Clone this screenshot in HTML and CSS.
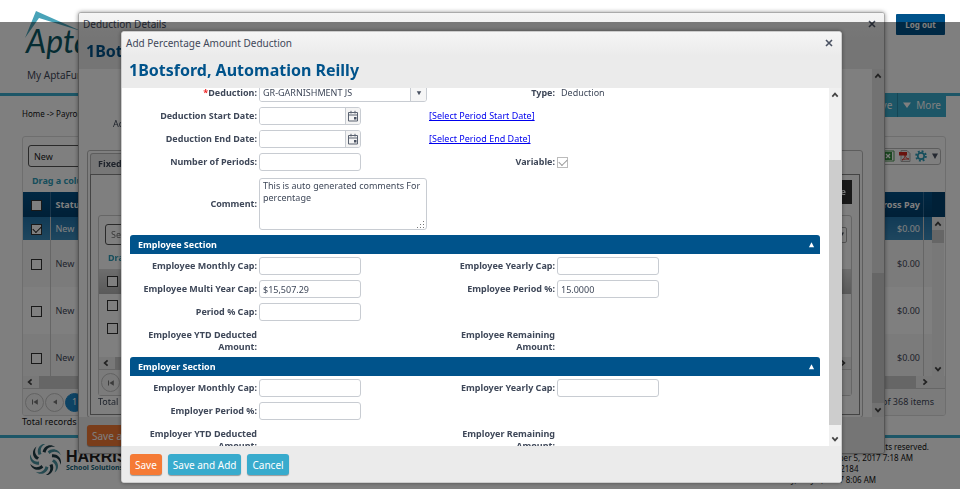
FILE: index.html
```html
<!DOCTYPE html>
<html lang="en">
<head>
<meta charset="utf-8">
<title>AptaFund - Add Percentage Amount Deduction</title>
<link rel="stylesheet" href="styles.css">
</head>
<body>
<svg class="defs" aria-hidden="true">
  <symbol id="up" viewBox="0 0 8 8"><path d="M1.300 5.600 4 2.600l2.700 3" fill="none" stroke="#444" stroke-width="1.700"/></symbol>
  <symbol id="down" viewBox="0 0 8 8"><path d="M1.300 2.400 4 5.400l2.700-3" fill="none" stroke="#444" stroke-width="1.700"/></symbol>
  <symbol id="left" viewBox="0 0 8 8"><path d="M5.600 1.300 2.600 4l3 2.700" fill="none" stroke="#444" stroke-width="1.700"/></symbol>
  <symbol id="right" viewBox="0 0 8 8"><path d="M2.400 1.300 5.400 4l-3 2.700" fill="none" stroke="#444" stroke-width="1.700"/></symbol>
  <symbol id="close" viewBox="0 0 8 8"><path d="M1 1l6 6M7 1 1 7" fill="none" stroke="#4a5262" stroke-width="1.600"/></symbol>
  <symbol id="first" viewBox="0 0 8 8"><path d="M1.500 1.500v5" stroke="#777" stroke-width="1"/><path d="M6.800 1.200v5.600L2.400 4z" fill="#777"/></symbol>
  <symbol id="prev" viewBox="0 0 8 8"><path d="M6 1.500v5L2 4z" fill="#777"/></symbol>
  <symbol id="caret" viewBox="0 0 8 8"><path d="M1 1.500h6L4 7z" fill="#4a5262"/></symbol>
  <symbol id="calendar" viewBox="0 0 12 12"><path d="M1.500 2.500h9v8.500h-9zM1.500 5h9M4 .8v2.700M8 .8v2.700" fill="none" stroke="#5a6270" stroke-width="1"/><path d="M7 7h2.500v2.500H7z" fill="#4a5262"/></symbol>
</svg>

<div class="page">
  <header class="top">
    <div class="brand">
      <svg class="roof" viewBox="0 0 56 28" aria-hidden="true"><path d="M11 0 0 27 14 7 56 20z" fill="#49a3b8"/></svg>
      <span class="brand-name">AptaFund</span>
    </div>
    <button class="logout" type="button">Log out</button>
    <div class="my">My AptaFund</div>
  </header>
  <nav class="menu">
    <a class="menu-item" href="#">Save</a>
    <a class="menu-item" href="#"><svg class="menu-caret" viewBox="0 0 8 8" aria-hidden="true"><path d="M0 1.500h8L4 7z" fill="#fff"/></svg>More</a>
  </nav>
  <div class="crumbs">Home -&gt; Payroll</div>

  <main class="card">
    <div class="card-bar">
      <input class="filter" type="text" value="New" aria-label="View">
      <div class="tools">
        <svg class="tool" viewBox="0 0 12 12" aria-label="Excel"><path d="M1 1h10v10H1z" fill="#fff" stroke="#4d9a52"/><path d="M1 2h8v8H1z" fill="#379040"/><path d="M3 4l4 4M7 4 3 8" stroke="#fff" stroke-width="1.300"/></svg>
        <svg class="tool" viewBox="0 0 12 12" aria-label="PDF"><path d="M2 .5h6l3 3v8H2z" fill="#eee" stroke="#aaa"/><path d="M0 2h8v3.500H0z" fill="#d3261c"/><path d="M3 10c2-1 3-3 3-5 0 2 2 4 4 4-3 0-5 0-7 1z" fill="none" stroke="#d3261c" stroke-width=".8"/></svg>
        <svg class="tool" viewBox="0 0 12 12" aria-label="Settings"><circle cx="6" cy="6" r="4.800" fill="none" stroke="#2e9cb8" stroke-width="2" stroke-dasharray="1.900 1.870"/><circle cx="6" cy="6" r="3.200" fill="none" stroke="#2e9cb8" stroke-width="1.700"/></svg>
        <svg class="mini" aria-hidden="true"><use href="#caret"/></svg>
      </div>
    </div>
    <div class="drag">Drag a column header here</div>
    <div class="grid-wrap">
      <table class="grid">
        <thead><tr><th class="c-check"><input type="checkbox" aria-label="Select all"></th><th>Status</th><th class="num">Gross Pay</th><th class="c-pad"></th></tr></thead>
        <tbody>
          <tr class="picked"><td class="c-check"><input type="checkbox" checked aria-label="Select row 1"></td><td>New</td><td class="num">$0.00</td><td></td></tr>
          <tr><td class="c-check"><input type="checkbox" aria-label="Select row 2"></td><td>New</td><td class="num">$0.00</td><td></td></tr>
          <tr><td class="c-check"><input type="checkbox" aria-label="Select row 3"></td><td>New</td><td class="num">$0.00</td><td></td></tr>
          <tr><td class="c-check"><input type="checkbox" aria-label="Select row 4"></td><td>New</td><td class="num">$0.00</td><td></td></tr>
        </tbody>
      </table>
      <div class="grid-side">
        <div class="grid-corner"></div>
        <div class="vbar"><svg class="mini"><use href="#up"/></svg><div class="thumb short"></div><svg class="mini end"><use href="#down"/></svg></div>
      </div>
    </div>
    <div class="hbar"><svg class="mini"><use href="#left"/></svg><div class="hthumb"></div><svg class="mini"><use href="#right"/></svg></div>
    <div class="pager">
      <button class="round" type="button" aria-label="First"><svg class="mini"><use href="#first"/></svg></button>
      <button class="round" type="button" aria-label="Previous"><svg class="mini"><use href="#prev"/></svg></button>
      <button class="round current" type="button">1</button>
      <span class="count">of 368 items</span>
    </div>
  </main>
  <div class="records">Total records</div>
  <footer class="foot">
    <div class="harris">
      <svg class="swirl" viewBox="-16 -16 32 32" aria-hidden="true">
        <g fill="#1e3c46">
          <path d="M-3-8C-2-14 5-17 10-13 5-14 1-12 0-7z"/>
          <path d="M-3-8C-2-14 5-17 10-13 5-14 1-12 0-7z" transform="rotate(72)"/>
          <path d="M-3-8C-2-14 5-17 10-13 5-14 1-12 0-7z" transform="rotate(144)"/>
          <path d="M-3-8C-2-14 5-17 10-13 5-14 1-12 0-7z" transform="rotate(216)"/>
          <path d="M-3-8C-2-14 5-17 10-13 5-14 1-12 0-7z" transform="rotate(288)"/>
        </g>
        <g fill="#4a93a0">
          <path d="M-3-8C-2-14 5-17 10-13 5-14 1-12 0-7z" transform="rotate(36)"/>
          <path d="M-3-8C-2-14 5-17 10-13 5-14 1-12 0-7z" transform="rotate(108)"/>
          <path d="M-3-8C-2-14 5-17 10-13 5-14 1-12 0-7z" transform="rotate(180)"/>
          <path d="M-3-8C-2-14 5-17 10-13 5-14 1-12 0-7z" transform="rotate(252)"/>
          <path d="M-3-8C-2-14 5-17 10-13 5-14 1-12 0-7z" transform="rotate(324)"/>
        </g>
      </svg>
      <div><div class="harris-name">HARRIS</div><div class="harris-sub">School Solutions</div></div>
    </div>
    <div class="legal">© 2017 Harris School Solutions. All rights reserved.<br>Updated: Tuesday, September 5, 2017 7:18 AM<br>Software Version: 2017.3.0.2184<br>Built on: Friday, May 5, 2017 8:06 AM</div>
  </footer>
</div>

<section class="dialog details" aria-label="Deduction Details">
  <div class="dialog-head">
    <div class="dialog-title">Deduction Details<button class="x" type="button" aria-label="Close"><svg class="mini"><use href="#close"/></svg></button></div>
    <h2 class="person">1Botsford, Automation Reilly</h2>
  </div>
  <div class="dialog-body">
    <div class="details-main">
      <div class="active-line">Active Deductions</div>
      <div class="tabs">
        <button class="tab" type="button">Fixed</button>
        <div class="tab-panel">
          <button class="dark" type="button">Create</button>
          <div class="sub-grid">
            <div class="sub-bar"><input class="filter sub-filter" type="text" placeholder="Search" aria-label="Search"><span class="sub-drop"><svg class="mini"><use href="#caret"/></svg></span></div>
            <div class="drag sub-drag">Drag a column header here</div>
            <div class="sub-row head"><input type="checkbox" aria-label="Select all deductions"></div>
            <div class="sub-row"><input type="checkbox" aria-label="Select deduction 1"></div>
            <div class="sub-row"><input type="checkbox" aria-label="Select deduction 2"></div>
            <div class="hbar"><svg class="mini"><use href="#left"/></svg><div class="hthumb"></div><svg class="mini"><use href="#right"/></svg></div>
            <div class="pager"><button class="round" type="button" aria-label="First deduction page"><svg class="mini"><use href="#first"/></svg></button></div>
          </div>
          <div class="sub-total">Total records</div>
        </div>
      </div>
    </div>
    <div class="vbar dim"><svg class="mini"><use href="#up"/></svg><div class="thumb low"></div><svg class="mini"><use href="#down"/></svg></div>
  </div>
  <div class="dialog-foot"><button class="btn primary" type="button">Save and Close</button></div>
</section>

<div class="shade"></div>

<section class="dialog add" role="dialog" aria-label="Add Percentage Amount Deduction">
  <div class="dialog-head">
    <div class="dialog-title">Add Percentage Amount Deduction<button class="x" type="button" aria-label="Close"><svg class="mini"><use href="#close"/></svg></button></div>
    <h2 class="person">1Botsford, Automation Reilly</h2>
  </div>
  <div class="dialog-body">
    <form class="form">
      <div class="fields">
        <label for="ded"><span class="req">*</span>Deduction:</label>
        <div class="combo"><select id="ded"><option>GR-GARNISHMENT JS</option></select><span class="combo-btn"><svg class="mini"><use href="#caret"/></svg></span></div>
        <span class="lab">Type:</span><span class="value">Deduction</span>

        <label for="start">Deduction Start Date:</label>
        <div class="date"><input id="start" type="text"><button type="button" aria-label="Pick start date"><svg class="cal"><use href="#calendar"/></svg></button></div>
        <a class="pick" href="#">[Select Period Start Date]</a>

        <label for="end">Deduction End Date:</label>
        <div class="date"><input id="end" type="text"><button type="button" aria-label="Pick end date"><svg class="cal"><use href="#calendar"/></svg></button></div>
        <a class="pick" href="#">[Select Period End Date]</a>

        <label for="num">Number of Periods:</label><input class="box" id="num" type="text">
        <label for="var">Variable:</label><input class="light" id="var" type="checkbox" checked>

        <label for="com">Comment:</label><div class="comment"><textarea id="com">This is auto generated comments For percentage</textarea><svg class="grip" viewBox="0 0 8 8" aria-hidden="true"><path d="M6 0h1v1H6zM3 3h1v1H3zM6 3h1v1H6zM0 6h1v1H0zM3 6h1v1H3zM6 6h1v1H6z" fill="#777"/></svg></div>
      </div>

      <h3 class="section">Employee Section<svg class="fold" viewBox="0 0 8 8" aria-hidden="true"><path d="M4 1.500 7 7H1z" fill="#fff"/></svg></h3>
      <div class="fields tight">
        <label for="emc">Employee Monthly Cap:</label><input class="box" id="emc" type="text">
        <label for="eyc">Employee Yearly Cap:</label><input class="box" id="eyc" type="text">
        <label for="emy">Employee Multi Year Cap:</label><input class="box" id="emy" type="text" value="$15,507.29">
        <label for="epp">Employee Period %:</label><input class="box" id="epp" type="text" value="15.0000">
        <label for="pct">Period % Cap:</label><input class="box wide" id="pct" type="text">
        <span class="lab">Employee YTD Deducted Amount:</span><span></span>
        <span class="lab">Employee Remaining Amount:</span><span></span>
      </div>

      <h3 class="section">Employer Section<svg class="fold" viewBox="0 0 8 8" aria-hidden="true"><path d="M4 1.500 7 7H1z" fill="#fff"/></svg></h3>
      <div class="fields tight">
        <label for="rmc">Employer Monthly Cap:</label><input class="box" id="rmc" type="text">
        <label for="ryc">Employer Yearly Cap:</label><input class="box" id="ryc" type="text">
        <label for="rpp">Employer Period %:</label><input class="box wide" id="rpp" type="text">
        <span class="lab">Employer YTD Deducted Amount:</span><span></span>
        <span class="lab">Employer Remaining Amount:</span><span></span>
      </div>
    </form>
    <div class="vbar"><svg class="mini"><use href="#up"/></svg><div class="thumb main"></div><svg class="mini"><use href="#down"/></svg></div>
  </div>
  <div class="dialog-foot">
    <button class="btn primary" type="button">Save</button>
    <button class="btn" type="button">Save and Add</button>
    <button class="btn" type="button">Cancel</button>
  </div>
</section>
</body>
</html>
```
FILE: styles.css
```css
* { box-sizing: border-box; }
html, body { height: 100%; }
body {
  margin: 0;
  overflow: hidden;
  background: #fff;
  color: #3f4859;
  font: 9px/12px "Noto Sans", "Open Sans", sans-serif;
}
button, input, select, textarea { font: inherit; color: inherit; margin: 0; }
button { cursor: pointer; }
.defs { position: absolute; width: 0; height: 0; }
.mini { display: block; width: 8px; height: 8px; flex: none; }

/* Page behind the dialogs */
.page { height: 100%; overflow: hidden; }
.top {
  display: grid;
  grid-template-columns: 1fr auto;
  grid-template-rows: 56px 1fr;
  height: 96px;
  padding: 11px 15px 0 25px;
  border-bottom: 3px solid #3aadce;
}
.brand { position: relative; }
.roof { position: absolute; left: 0; top: 0; width: 56px; height: 28px; }
.brand-name { display: block; padding: 12px 0 0 1px; font: italic 32px/36px Lato, sans-serif; color: #0b5864; }
.logout {
  align-self: start;
  width: 49px;
  height: 21px;
  margin-top: 3px;
  padding: 0;
  border: 0;
  border-radius: 1px;
  background: #00538b;
  color: #fff;
  font-weight: bold;
  font-size: 8px;
}
.my { padding-left: 2px; font-size: 10px; line-height: 16px; }
.menu { display: flex; width: max-content; margin: -3px 14px 0 auto; background: #3aadce; }
.menu-item {
  display: flex;
  align-items: center;
  gap: 5px;
  height: 24px;
  padding: 0 5px;
  color: #fff;
  font-size: 10px;
  text-decoration: none;
}
.menu-item + .menu-item { border-left: 1px solid #2b8dab; }
.menu-caret { width: 8px; height: 8px; }
.crumbs { margin: -9px 22px 0; color: #111; font-size: 8px; }

.card {
  margin: 16px 14px 0 22px;
  border: 1px solid #ddd;
  border-radius: 3px;
  overflow: hidden;
}
.card-bar { display: flex; justify-content: space-between; align-items: center; padding: 8px 4px 0 5px; }
.filter {
  width: 150px;
  height: 22px;
  padding: 0 5px;
  border: 1px solid #555;
  border-radius: 3px;
  background: #fff;
  color: #222;
}
.tools {
  display: flex;
  align-items: center;
  gap: 4px;
  height: 17px;
  padding: 0 1px 0 6px;
  border: 1px solid #bbb;
  border-radius: 3px;
}
.tool { width: 12px; height: 12px; }
.drag { padding: 8px 9px 5px; color: #2e9cb8; font-weight: bold; }
.grid-wrap { display: flex; height: 184px; overflow: hidden; }
.grid { flex: 1; align-self: flex-start; border-collapse: collapse; }
.grid th, .grid td { padding: 0 3px 0 5px; text-align: left; border-left: 1px solid #ccc; }
.grid th { height: 25px; background: linear-gradient(#004f86, #00406e); color: #fff; border-color: #356f9a; }
.grid td { height: 47px; }
.grid .picked td { height: 23px; background: linear-gradient(#2275ac, #3d8dbd); color: #fff; }
.grid .num { text-align: right; }
.grid .c-check { width: 27px; padding: 0; border-left: 0; text-align: center; }
.grid .c-pad { width: 8px; padding: 0; }
.grid tbody tr:nth-child(even) { background: #f7f7f7; }
input[type="checkbox"] {
  position: relative;
  appearance: none;
  width: 11px;
  height: 11px;
  border: 1px solid #333;
  background: #fff;
  vertical-align: middle;
}
input[type="checkbox"]:checked::after {
  content: "";
  position: absolute;
  left: 1px;
  top: 1px;
  width: 7px;
  height: 4px;
  border: solid #222;
  border-width: 0 0 1px 1px;
  transform: rotate(-45deg);
}
.grid-side { display: flex; flex-direction: column; width: 13px; }
.grid-corner { flex: none; height: 25px; background: #00406e; }
.vbar {
  display: flex;
  flex-direction: column;
  align-items: center;
  flex: none;
  width: 12px;
  padding: 3px 0;
  background: #f0f0f0;
}
.thumb { width: 12px; background: #cdcdcd; }
.short { height: 13px; margin-top: 2px; }
.grid-side .vbar { flex: 1; }
.end { margin-top: auto; }
.hbar { display: flex; align-items: center; gap: 5px; height: 12px; padding: 0 16px 0 3px; background: #f0f0f0; }
.hthumb { flex: 1; height: 12px; background: #cdcdcd; }
.pager { display: flex; align-items: center; gap: 1px; height: 27px; padding: 0 11px 0 2px; border-top: 1px solid #ccc; background: #f7f7f7; }
.round {
  display: grid;
  place-items: center;
  width: 19px;
  height: 19px;
  padding: 0;
  border: 1px solid #c4c4c4;
  border-radius: 50%;
  background: #f4f4f4;
}
.current { border-color: #1a86c8; background: #1a86c8; color: #fff; }
.count { margin-left: auto; }
.records { padding: 0 22px; color: #111; }
.foot {
  display: flex;
  justify-content: space-between;
  margin-top: 7px;
  padding: 3px 31px 0 30px;
  border-top: 3px solid #3aadce;
}
.harris { display: flex; gap: 5px; padding-top: 3px; }
.swirl { width: 31px; height: 31px; }
.harris-name { padding-top: 6px; font: bold 16px/13px "Liberation Sans", sans-serif; color: #222; }
.harris-sub { color: #12657a; font-weight: bold; font-size: 7px; line-height: 10px; }
.legal { color: #111; font-size: 8px; line-height: 11px; }

/* Dialogs */
.shade { position: fixed; inset: 22px 0 0; background: rgba(0, 0, 0, .5); }
.dialog {
  position: fixed;
  display: flex;
  flex-direction: column;
  overflow: hidden;
  border: 1px solid #aaa;
  border-radius: 3px;
  background: #fff;
  box-shadow: 0 0 4px rgba(0, 0, 0, .4);
}
.details { inset: 12px 75px 35px 78px; }
.add { inset: 31px 118px 6px 121px; border-color: #ccc; }
.dialog-head { height: 56px; padding: 0 8px 0 4px; background: linear-gradient(#f5f5f5, #ebebeb 24px); }
.dialog-title { display: flex; justify-content: space-between; align-items: center; height: 22px; font-size: 10px; }
.x { padding: 0; border: 0; background: none; }
.person { margin: 5px 0 0 3px; color: #00538b; font-size: 16px; line-height: 22px; }
.dialog-body { display: flex; flex: 1; min-height: 0; overflow: hidden; }
.dialog-foot { display: flex; flex: none; gap: 6px; height: 36px; padding: 8px; background: #ebebeb; }
.btn {
  height: 21px;
  padding: 0 5px;
  border: 0;
  border-radius: 3px;
  background: #38abcd;
  color: #fff;
  font-size: 10px;
  box-shadow: 0 1px 1px rgba(0, 0, 0, .35);
}
.primary { background: #f57a35; }

/* Deduction details dialog */
.details-main { flex: 1; padding: 0 8px; }
.active-line { padding: 49px 26px 20px; }
.tabs { height: 268px; padding: 2px; margin-right: 1px; border: 1px solid #bbb; border-radius: 3px; }
.tab { display: block; height: 21px; padding: 0 7px; border: 1px solid #bbb; border-bottom: 0; border-radius: 3px 3px 0 0; background: #eee; font-weight: bold; }
.tab-panel { height: 241px; padding: 5px 7px 0; border: 1px solid #888; }
.dark { display: block; height: 24px; margin-left: auto; padding: 0 6px; border: 0; background: #333; color: #fff; font-weight: bold; }
.sub-grid { margin-top: 11px; border: 1px solid #ccc; border-radius: 3px; }
.sub-bar { display: flex; justify-content: space-between; align-items: center; padding: 8px 4px 0 6px; }
.sub-filter { height: 21px; }
.sub-drop { display: grid; place-items: center; width: 12px; height: 16px; border: 1px solid #aaa; border-radius: 2px; }
.sub-drag { padding: 7px 9px 5px; }
.sub-row { height: 23px; padding: 5px 8px; }
.sub-row.head { height: 25px; padding: 6px 8px; background: linear-gradient(#dcdcdc, #b4b4b4); }
.sub-grid .hbar { margin-top: 17px; padding-right: 4px; }
.sub-grid .pager { height: 26px; }
.sub-total { line-height: 11px; }
.dim { background: #e4e4e4; }
.low { height: 135px; margin-top: 193px; }
.low + .mini { margin-top: 3px; }

/* Add deduction form */
.form { flex: 1; min-width: 0; padding: 0 9px 0 8px; margin-top: -4px; }
.fields {
  display: grid;
  grid-template-columns: 127px 168px 126px 1fr;
  align-items: center;
  gap: 5px 2px;
  padding-bottom: 3px;
}
.fields label, .lab { text-align: right; font-weight: bold; }
.req { color: #e22; }
.value { padding-left: 4px; }
.box, .date, .combo, .comment textarea {
  border: 1px solid #c8ccd2;
  border-radius: 3px;
  background: #fff;
}
.box { width: 102px; height: 18px; padding: 0 3px; }
.date { display: flex; width: 102px; height: 18px; overflow: hidden; }
.date input { flex: 1; min-width: 0; border: 0; padding: 0 3px; }
.date button { display: grid; place-items: center; width: 15px; padding: 0; border: 0; border-left: 1px solid #c8ccd2; background: #f4f4f4; }
.cal { width: 12px; height: 12px; }
.combo { display: flex; height: 18px; overflow: hidden; }
.combo select { flex: 1; min-width: 0; appearance: none; border: 0; padding: 0 3px; background: #fff; }
.combo-btn { display: grid; place-items: center; width: 16px; border-left: 1px solid #c8ccd2; background: #f6f6f6; }
.combo-btn .mini { width: 6px; height: 6px; }
.pick { grid-column: 3 / 5; color: #00e; }
input.light { border-color: #bbb; }
input.light:checked::after { border-color: #999; }
.comment { position: relative; height: 52px; margin: 2px 0; }
.comment textarea { display: block; width: 100%; height: 52px; padding: 1px 3px; resize: none; overflow: hidden; }
.grip { position: absolute; right: 2px; bottom: 1px; width: 8px; height: 8px; }
.section {
  display: flex;
  justify-content: space-between;
  align-items: center;
  height: 19px;
  margin: 0;
  padding: 0 5px 0 8px;
  border-radius: 3px 3px 0 0;
  background: #00538b;
  color: #fff;
  font-size: 9px;
}
.fold { width: 7px; height: 7px; }
.tight { padding: 3px 0 4px; }
.tight .lab { padding-top: 3px; }
.wide { grid-column: 2 / 5; }
.main { height: 265px; margin-top: 61px; }
.main + .mini { margin-top: auto; }
```
